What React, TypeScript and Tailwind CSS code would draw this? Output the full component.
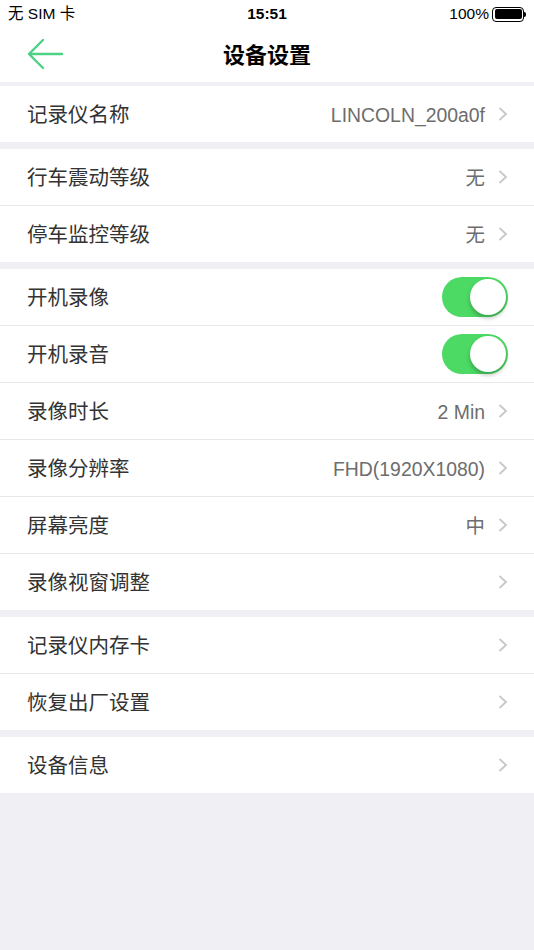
import React, { useState } from "react";

type Row = {
  label: string;
  value?: string;
  toggle?: boolean;
};

const groups: Row[][] = [
  [{ label: "记录仪名称", value: "LINCOLN_200a0f" }],
  [
    { label: "行车震动等级", value: "无" },
    { label: "停车监控等级", value: "无" },
  ],
  [
    { label: "开机录像", toggle: true },
    { label: "开机录音", toggle: true },
    { label: "录像时长", value: "2 Min" },
    { label: "录像分辨率", value: "FHD(1920X1080)" },
    { label: "屏幕亮度", value: "中" },
    { label: "录像视窗调整" },
  ],
  [{ label: "记录仪内存卡" }, { label: "恢复出厂设置" }],
  [{ label: "设备信息" }],
];

function Chevron() {
  return (
    <svg width="10" height="14" viewBox="0 0 10 14" className="ml-[13px] mr-[26px]">
      <path d="M1.5 1 L8 7 L1.5 13" fill="none" stroke="#c7c7cc" strokeWidth="1.8" />
    </svg>
  );
}

function Toggle({ on, onClick }: { on: boolean; onClick: () => void }) {
  return (
    <button
      onClick={onClick}
      className={`relative mr-[26px] h-[40px] w-[66px] rounded-full transition-colors ${
        on ? "bg-[#4cd964]" : "bg-[#e5e5ea]"
      }`}
    >
      <span
        className={`absolute top-[2px] h-[36px] w-[36px] rounded-full bg-white shadow-[0_3px_4px_rgba(0,0,0,0.25)] transition-all ${
          on ? "left-[28px]" : "left-[2px]"
        }`}
      />
    </button>
  );
}

function SettingRow({ row }: { row: Row }) {
  const [on, setOn] = useState(true);
  return (
    <div className="box-content flex h-[56px] items-center bg-white">
      <span className="flex-1 pl-[27px] pt-[3px] text-[20.5px] text-[#333]">{row.label}</span>
      {row.toggle ? (
        <Toggle on={on} onClick={() => setOn(!on)} />
      ) : (
        <>
          {row.value && (
            <span className="pt-[3px] text-[19.4px] text-[#6d6d6d]">{row.value}</span>
          )}
          <Chevron />
        </>
      )}
    </div>
  );
}

export default function App() {
  return (
    <div
      className="flex min-h-[950px] flex-col bg-[#efeff4]"
      style={{ fontFamily: '"Liberation Sans", "Noto Sans CJK SC", sans-serif' }}
    >
      {/* status bar */}
      <div className="flex h-[28px] items-center justify-between bg-white px-[8px] text-[15.5px] text-black">
        <span className="w-[120px]">无 SIM 卡</span>
        <span className="font-bold">15:51</span>
        <span className="flex w-[120px] items-center justify-end gap-[3px]">
          100%
          <span className="flex items-center">
            <span className="flex h-[15px] w-[32px] items-center rounded-[4px] border border-black p-[1.5px]">
              <span className="h-full w-full rounded-[2px] bg-black" />
            </span>
            <span className="h-[5px] w-[2px] rounded-r-sm bg-black" />
          </span>
        </span>
      </div>

      {/* nav bar */}
      <div className="relative flex h-[54px] items-center justify-center bg-white">
        <button className="absolute left-[26px] top-[10px]">
          <svg width="38" height="32" viewBox="0 0 38 32">
            <path
              d="M36 16 H3 M17 2 L3 16 L17 30"
              fill="none"
              stroke="#4cd284"
              strokeWidth="2.4"
              strokeLinecap="round"
              strokeLinejoin="round"
            />
          </svg>
        </button>
        <span className="text-[22px] font-bold text-black">设备设置</span>
      </div>

      <div className="flex flex-col gap-[7px] pt-[4px]">
        {groups.map((g, i) => (
          <div key={i} className="flex flex-col divide-y divide-[#e8e8ea] bg-white">
            {g.map((r) => (
              <SettingRow key={r.label} row={r} />
            ))}
          </div>
        ))}
      </div>
    </div>
  );
}
